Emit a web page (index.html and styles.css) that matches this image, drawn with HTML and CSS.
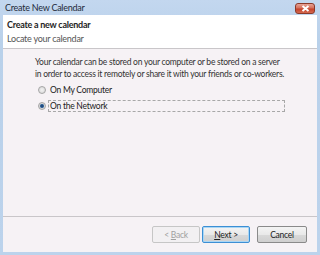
FILE: index.html
```html
<!DOCTYPE html>
<html lang="en">
<head>
    <meta charset="UTF-8">
    <title>Create New Calendar</title>
    <link rel="stylesheet" href="styles.css">
</head>
<body>

<div class="window">
    <div class="titlebar">
        <span class="title">Create New Calendar</span>
        <span class="close">
            <svg width="9" height="7" viewBox="0 0 9 7"><path d="M1.5 1 L7.5 6 M7.5 1 L1.5 6" stroke="#fff" stroke-width="2"/></svg>
        </span>
    </div>

    <div class="client">
        <div class="header">
            <div class="header-title">Create a new calendar</div>
            <div class="header-sub">Locate your calendar</div>
        </div>

        <div class="content">
            <p class="intro">Your calendar can be stored on your computer or be stored on a server<br>in order to access it remotely or share it with your friends or co-workers.</p>

            <label class="option">
                <span class="radio"></span>
                <span class="option-text">On My Computer</span>
            </label>
            <label class="option">
                <span class="radio checked"></span>
                <span class="option-text focused">On the Network</span>
            </label>
        </div>

        <div class="footer">
            <button class="btn back" disabled>&lt; <u>B</u>ack</button>
            <button class="btn default"><u>N</u>ext &gt;</button>
            <button class="btn cancel">Cancel</button>
        </div>
    </div>
</div>

</body>
</html>
```

FILE: styles.css
```css
body {
    margin: 0;
    padding: 0;
    font-family: 'Lato', 'Noto Sans', sans-serif;
    font-size: 8.5px;
    letter-spacing: -0.25px;
    color: #1e1e1e;
}
.window {
    width: 320px;
    height: 255px;
    box-sizing: border-box;
    background: linear-gradient(#c3d7ef, #b9d1ea 40px, #bcd3ec);
    padding: 0 3px 3px 3px;
    display: flex;
    flex-direction: column;
}
.titlebar {
    height: 15px;
    display: flex;
    align-items: center;
    justify-content: space-between;
    padding-left: 2px;
}
.title {
    font-size: 9px;
    color: #1e2a3a;
    line-height: 15px;
}
.close {
    width: 20px;
    height: 11px;
    margin-right: 2px;
    margin-top: 1px;
    border: 1px solid #8b3a2a;
    border-radius: 3px;
    box-sizing: border-box;
    background: linear-gradient(#e7a396, #d5705c 45%, #c5412a 55%, #d56a50);
    display: flex;
    align-items: center;
    justify-content: center;
}
.client {
    flex: 1;
    background-color: #f6f2f5;
    display: flex;
    flex-direction: column;
}
.header {
    background-color: #ffffff;
    height: 30px;
    border-bottom: 1px solid #c9c6c9;
    padding: 3px 4px 0 4px;
}
.header-title {
    font-weight: bold;
    font-size: 9px;
    line-height: 14px;
}
.header-sub {
    font-size: 9px;
    color: #555;
    line-height: 14px;
}
.content {
    flex: 1;
    padding: 7px 32px 0 32px;
    border-bottom: 1px solid #c9c6c9;
}
.intro {
    margin: 0 0 2px 0;
    line-height: 12px;
    color: #333;
}
.option {
    display: flex;
    align-items: center;
    height: 16px;
    color: #222;
}
.radio {
    width: 6px;
    height: 6px;
    border: 1px solid #a5a5a5;
    border-radius: 50%;
    background: radial-gradient(#f3f3f3, #d4d4d4);
    margin: 0 2px 0 3px;
    flex: none;
}
.radio.checked {
    background: radial-gradient(circle, #1b3a66 0, #2a5d95 1.5px, #d9d9d9 2.5px, #cfcfcf);
}
.option-text {
    line-height: 10px;
    padding: 0 1px;
    border: 1px dashed transparent;
}
.option-text.focused {
    border-color: #a8a8a8;
    flex: 1;
}
.footer {
    height: 35px;
    display: flex;
    justify-content: flex-end;
    align-items: center;
    padding-right: 10px;
}
.btn {
    width: 48px;
    height: 17px;
    font-family: inherit;
    font-size: 8.5px;
    letter-spacing: -0.25px;
    padding: 0;
    border: 1px solid #8a8a8a;
    border-radius: 2px;
    background: linear-gradient(#f4f4f4, #e9e9e9 50%, #d9d9d9 51%, #cfcfcf);
    color: #222;
    line-height: 14px;
}
.btn.back {
    border-color: #c6c6c6;
    background: #f2f0f2;
    color: #a0a0a0;
}
.btn.default {
    margin-left: 2px;
    border-color: #3c8fd4;
    box-shadow: inset 0 0 0 1px #a9d6f5;
}
.btn.cancel {
    width: 50px;
    margin-left: 7px;
}
```
